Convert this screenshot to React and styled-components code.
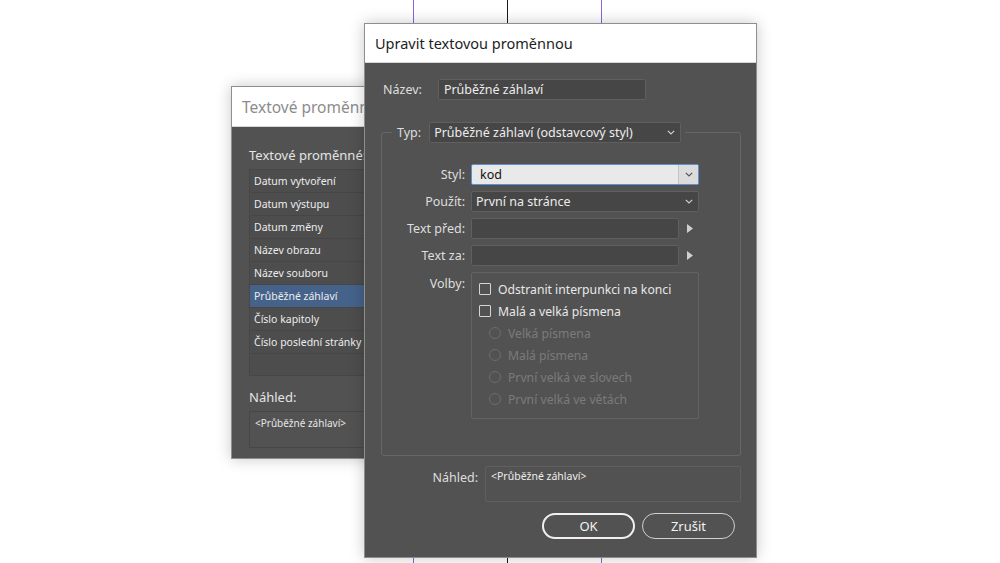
import React from "react";
import styled, { createGlobalStyle } from "styled-components";

const GlobalStyle = createGlobalStyle`
  html, body {
    margin: 0;
    padding: 0;
    background: #ffffff;
    overflow: hidden;
  }
  * {
    box-sizing: border-box;
  }
`;

const UI_FONT = `"Noto Sans", "Open Sans", "Liberation Sans", sans-serif`;

const Canvas = styled.div`
  position: relative;
  width: 1000px;
  height: 563px;
  background: #ffffff;
  overflow: hidden;
  font-family: ${UI_FONT};
`;

const Guide = styled.div`
  position: absolute;
  top: 0;
  bottom: 0;
  left: ${(p) => p.x}px;
  width: 1px;
  background: ${(p) => p.color};
`;

const Window = styled.div`
  position: absolute;
  left: ${(p) => p.x}px;
  top: ${(p) => p.y}px;
  width: ${(p) => p.w}px;
  height: ${(p) => p.h}px;
  display: flex;
  flex-direction: column;
  background: #525252;
  border: 1px solid #8e8e8e;
  box-shadow: 0 0 14px rgba(0, 0, 0, 0.22);
`;

const TitleBar = styled.div`
  height: ${(p) => p.h}px;
  flex: none;
  display: flex;
  align-items: center;
  padding-left: 10px;
  background: #ffffff;
  border-bottom: 1px solid #d6d6d6;
  color: ${(p) => (p.dim ? "#8c8c8c" : "#1e1e1e")};
  font-size: ${(p) => (p.dim ? "15.5px" : "14.5px")};
  white-space: nowrap;
  overflow: hidden;
`;

/* ---------- back dialog ---------- */

const BackBody = styled.div`
  padding: 19px 0 0 17px;
  display: flex;
  flex-direction: column;
  color: #e4e4e4;
`;

const SectionLabel = styled.div`
  font-size: 13px;
  line-height: 18px;
  margin-bottom: ${(p) => p.mb || 5}px;
`;

const VarList = styled.div`
  width: 140px;
  height: 207px;
  border: 1px solid #474747;
  border-right: none;
  background: #4d4d4d;
  display: flex;
  flex-direction: column;
  margin-bottom: 12px;
`;

const VarRow = styled.div`
  height: 23px;
  flex: none;
  display: flex;
  align-items: center;
  padding-left: 4px;
  font-size: 10.5px;
  color: #ececec;
  white-space: nowrap;
  background: ${(p) => (p.selected ? "#45628a" : "transparent")};
  border-bottom: 1px solid #464646;
`;

const SmallPreview = styled.div`
  width: 140px;
  height: 37px;
  border: 1px solid #474747;
  border-right: none;
  padding: 4px 5px;
  font-size: 10px;
  color: #e6e6e6;
  white-space: nowrap;
`;

/* ---------- front dialog ---------- */

const FrontBody = styled.div`
  flex: 1;
  display: flex;
  flex-direction: column;
  padding: 16px 15px 0 16px;
  color: #dcdcdc;
  font-size: 12.5px;
`;

const NameRow = styled.div`
  display: flex;
  align-items: center;
  gap: 16px;
  padding-left: 2px;
`;

const Label = styled.span`
  font-size: 12.5px;
  color: #dedede;
  white-space: nowrap;
  width: ${(p) => (p.w ? `${p.w}px` : "auto")};
  text-align: ${(p) => p.align || "left"};
`;

const TextBox = styled.div`
  width: ${(p) => p.w}px;
  height: 21px;
  display: flex;
  align-items: center;
  padding-left: 5px;
  background: #464646;
  border: 1px solid #5f5f5f;
  border-radius: 2px;
  color: #ececec;
  font-size: 12.5px;
  white-space: nowrap;
`;

const Group = styled.fieldset`
  margin: 22px 0 0 0;
  padding: 9px 0 0 0;
  width: 360px;
  height: 334px;
  border: 1px solid #676767;
  border-radius: 3px;
  min-width: 0;
`;

const Legend = styled.legend`
  margin-left: 10px;
  padding: 0 4px 0 5px;
  display: flex;
  align-items: center;
  gap: 8px;
`;

const Select = styled.div`
  width: ${(p) => p.w}px;
  height: 21px;
  display: flex;
  align-items: center;
  justify-content: space-between;
  background: ${(p) => (p.active ? "#e9e9e9" : "#464646")};
  border: 1px solid ${(p) => (p.active ? "#5b8fd6" : "#5f5f5f")};
  border-radius: 2px;
  color: ${(p) => (p.active ? "#111" : "#ececec")};
  font-size: 12.5px;
  white-space: nowrap;
  padding-left: ${(p) => (p.active ? 8 : 4)}px;
`;

const Chevron = styled.span`
  width: 20px;
  height: 100%;
  display: flex;
  align-items: center;
  justify-content: center;
  background: ${(p) => (p.active ? "#dcdcdc" : "transparent")};
  border-left: 1px solid ${(p) => (p.active ? "#c4c4c4" : "transparent")};
`;

const FieldGrid = styled.div`
  display: grid;
  grid-template-columns: 83px auto;
  column-gap: 6px;
  row-gap: 6px;
  align-items: center;
  margin-top: 12px;
`;

const ControlWithArrow = styled.div`
  display: flex;
  align-items: center;
  gap: 8px;
`;

const OptionsLabel = styled(Label)`
  align-self: start;
  padding-top: 3px;
`;

const OptionsBox = styled.div`
  width: 228px;
  height: 147px;
  border: 1px solid #636363;
  border-radius: 2px;
  padding: 5px 0 0 7px;
  display: flex;
  flex-direction: column;
`;

const OptionRow = styled.div`
  height: 22px;
  display: flex;
  align-items: center;
  gap: 7px;
  padding-left: ${(p) => (p.indent ? 10 : 0)}px;
  color: ${(p) => (p.disabled ? "#7b7b7b" : "#e8e8e8")};
  font-size: 12.2px;
  white-space: nowrap;
`;

const Check = styled.span`
  width: 12px;
  height: 12px;
  border: 1px solid #d4d4d4;
  border-radius: 1px;
  flex: none;
`;

const Radio = styled.span`
  width: 12px;
  height: 12px;
  border: 1px solid #6c6c6c;
  border-radius: 50%;
  flex: none;
`;

const PreviewRow = styled.div`
  display: flex;
  align-items: flex-start;
  gap: 7px;
  margin-top: 10px;
  padding-left: 30px;
`;

const PreviewLabel = styled(Label)`
  width: 67px;
  text-align: right;
  padding-top: 3px;
`;

const PreviewBox = styled.div`
  width: 256px;
  height: 36px;
  border: 1px solid #5f5f5f;
  border-radius: 2px;
  padding: 2px 5px;
  font-size: 10.5px;
  color: #ececec;
  white-space: nowrap;
`;

const ButtonRow = styled.div`
  display: flex;
  justify-content: flex-end;
  gap: 7px;
  margin-top: 11px;
  padding-right: 6px;
`;

const Button = styled.div`
  width: ${(p) => p.w}px;
  height: 26px;
  border-radius: 13px;
  border: ${(p) => (p.primary ? "2px solid #f0f0f0" : "1px solid #d0d0d0")};
  display: flex;
  align-items: center;
  justify-content: center;
  color: #f2f2f2;
  font-size: 13px;
`;

function ChevronIcon({ dark }) {
  return (
    <svg width="8" height="5" viewBox="0 0 8 5">
      <polyline
        points="0.8,0.8 4,4 7.2,0.8"
        fill="none"
        stroke={dark ? "#555" : "#cfcfcf"}
        strokeWidth="1.2"
      />
    </svg>
  );
}

function ArrowRight() {
  return (
    <svg width="6" height="9" viewBox="0 0 6 9">
      <polygon points="0,0 6,4.5 0,9" fill="#cfcfcf" />
    </svg>
  );
}

const variables = [
  "Datum vytvoření",
  "Datum výstupu",
  "Datum změny",
  "Název obrazu",
  "Název souboru",
  "Průběžné záhlaví",
  "Číslo kapitoly",
  "Číslo poslední stránky",
];

const caseOptions = [
  "Velká písmena",
  "Malá písmena",
  "První velká ve slovech",
  "První velká ve větách",
];

export default function App() {
  return (
    <Canvas>
      <GlobalStyle />
      <Guide x={413} color="#8d63d8" />
      <Guide x={507} color="#1a1a1a" />
      <Guide x={601} color="#8d63d8" />

      <Window x={231} y={86} w={170} h={373}>
        <TitleBar h={40} dim>
          Textové proměnné
        </TitleBar>
        <BackBody>
          <SectionLabel>Textové proměnné:</SectionLabel>
          <VarList>
            {variables.map((v) => (
              <VarRow key={v} selected={v === "Průběžné záhlaví"}>
                {v}
              </VarRow>
            ))}
          </VarList>
          <SectionLabel mb={5}>Náhled:</SectionLabel>
          <SmallPreview>&lt;Průběžné záhlaví&gt;</SmallPreview>
        </BackBody>
      </Window>

      <Window x={364} y={23} w={393} h={535}>
        <TitleBar h={39}>Upravit textovou proměnnou</TitleBar>
        <FrontBody>
          <NameRow>
            <Label>Název:</Label>
            <TextBox w={208}>Průběžné záhlaví</TextBox>
          </NameRow>

          <Group>
            <Legend>
              <Label>Typ:</Label>
              <Select w={252}>
                Průběžné záhlaví (odstavcový styl)
                <Chevron>
                  <ChevronIcon />
                </Chevron>
              </Select>
            </Legend>

            <FieldGrid>
              <Label align="right">Styl:</Label>
              <Select w={228} active>
                kod
                <Chevron active>
                  <ChevronIcon dark />
                </Chevron>
              </Select>

              <Label align="right">Použít:</Label>
              <Select w={228}>
                První na stránce
                <Chevron>
                  <ChevronIcon />
                </Chevron>
              </Select>

              <Label align="right">Text před:</Label>
              <ControlWithArrow>
                <TextBox w={208} />
                <ArrowRight />
              </ControlWithArrow>

              <Label align="right">Text za:</Label>
              <ControlWithArrow>
                <TextBox w={208} />
                <ArrowRight />
              </ControlWithArrow>

              <OptionsLabel align="right">Volby:</OptionsLabel>
              <OptionsBox>
                <OptionRow>
                  <Check />
                  Odstranit interpunkci na konci
                </OptionRow>
                <OptionRow>
                  <Check />
                  Malá a velká písmena
                </OptionRow>
                {caseOptions.map((o) => (
                  <OptionRow key={o} indent disabled>
                    <Radio />
                    {o}
                  </OptionRow>
                ))}
              </OptionsBox>
            </FieldGrid>
          </Group>

          <PreviewRow>
            <PreviewLabel>Náhled:</PreviewLabel>
            <PreviewBox>&lt;Průběžné záhlaví&gt;</PreviewBox>
          </PreviewRow>

          <ButtonRow>
            <Button w={93} primary>
              OK
            </Button>
            <Button w={93}>Zrušit</Button>
          </ButtonRow>
        </FrontBody>
      </Window>
    </Canvas>
  );
}
